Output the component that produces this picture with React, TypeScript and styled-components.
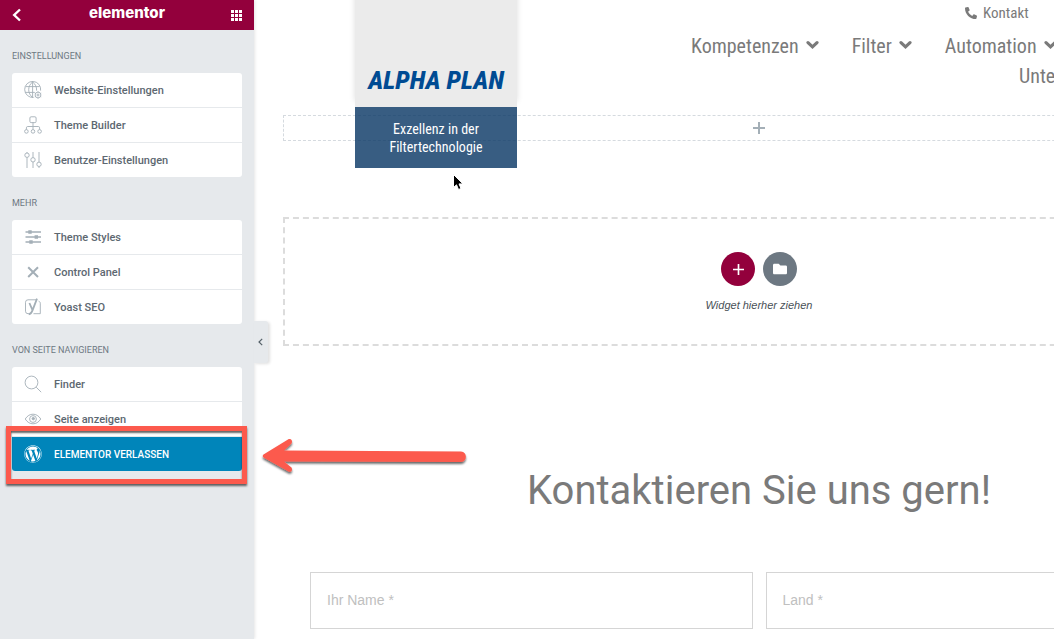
import React from "react";
import styled, { createGlobalStyle, css } from "styled-components";
import { FaPhoneAlt, FaWordpress, FaFolder } from "react-icons/fa";

const condensed = `"Liberation Sans Narrow", "Roboto Condensed", Roboto, sans-serif`;

const GlobalStyle = createGlobalStyle`
  *, *::before, *::after { box-sizing: border-box; }
  body {
    margin: 0;
    background: #fff;
    font-family: Roboto, "Liberation Sans", sans-serif;
    overflow: hidden;
  }
  button, input { font: inherit; color: inherit; }
  a { color: inherit; text-decoration: none; }
  svg { display: block; }
`;

const Editor = styled.div`
  position: relative;
  display: flex;
  min-height: 100vh;
  overflow: hidden;
`;

/* Sidebar */

const Panel = styled.aside`
  position: relative;
  z-index: 2;
  flex: 0 0 254px;
  background: #e6e9ec;
  box-shadow: 1px 0 3px rgba(0, 0, 0, 0.1);
`;

const PanelHeader = styled.header`
  display: flex;
  align-items: center;
  justify-content: space-between;
  height: 30px;
  padding: 0 10px;
  background: #93003c;
  color: #fff;
`;

const HeaderButton = styled.button`
  display: flex;
  align-items: center;
  justify-content: center;
  width: 14px;
  height: 24px;
  padding: 0;
  border: 0;
  background: none;
`;

const Wordmark = styled.span`
  padding-bottom: 4px;
  font: 800 15px/22px Inter, "Open Sans", sans-serif;
`;

const Menu = styled.nav`
  padding: 0 12px;
`;

const Group = styled.section`
  padding-top: 18px;
`;

const GroupTitle = styled.h2`
  margin: 0 0 9px;
  font-size: 9px;
  font-weight: 400;
  line-height: 16px;
  text-transform: uppercase;
  color: #6d7882;
`;

const List = styled.ul`
  margin: 0;
  padding: 0;
  list-style: none;
  border-radius: 3px;
  background: #fff;
`;

const Item = styled.li`
  position: relative;
  & + & {
    border-top: 1px solid #e6e9ec;
  }
`;

const ItemLink = styled.a<{ $primary?: boolean }>`
  display: flex;
  align-items: center;
  gap: 12px;
  height: 34px;
  padding: 0 12px;
  font-size: 11px;
  font-weight: 500;
  color: #5d6871;
  svg {
    flex: none;
    width: 18px;
    height: 18px;
    color: #a4afb7;
  }
  ${(p) =>
    p.$primary &&
    css`
      border-radius: 0 0 3px 3px;
      background: #0085ba;
      color: #fff;
      font-size: 10px;
      text-transform: uppercase;
      svg {
        color: #fff;
      }
    `}
`;

const Highlight = styled.span`
  position: absolute;
  inset: -11px -5px -13px -6px;
  border: 5px solid #fc5a4d;
  box-shadow: 0 2px 2px rgba(0, 0, 0, 0.6), inset 0 2px 2px rgba(0, 0, 0, 0.6);
  pointer-events: none;
`;

const Toggler = styled.button`
  position: absolute;
  left: 100%;
  top: 321px;
  display: flex;
  align-items: center;
  justify-content: center;
  width: 14px;
  height: 42px;
  padding: 0 2px 0 0;
  border: 0;
  border-radius: 0 3px 3px 0;
  background: #e6e9ec;
  color: #556068;
  box-shadow: 2px 1px 3px rgba(0, 0, 0, 0.12);
`;

/* Preview */

const Preview = styled.main`
  flex: 1;
  min-width: 0;
  overflow: hidden;
`;

const Canvas = styled.div`
  position: relative;
  width: calc(100% + 210px);
  padding: 0 29px;
  color: #7a7a7a;
`;

const SiteHeader = styled.header`
  height: 115px;
  padding-left: 408px;
  font-family: ${condensed};
`;

const ContactLink = styled.a`
  display: flex;
  align-items: center;
  gap: 6px;
  width: max-content;
  padding: 3px 0 0 274px;
  font-size: 15px;
  line-height: 20px;
`;

const NavRow = styled.div<{ $indent?: boolean }>`
  display: flex;
  gap: 33px;
  padding-left: ${(p) => (p.$indent ? "328px" : "0")};
  white-space: nowrap;
`;

const SiteNav = styled.nav`
  padding-top: 8px;
`;

const NavLink = styled.a`
  display: flex;
  align-items: center;
  gap: 7px;
  font-size: 20px;
  line-height: 30px;
  svg {
    margin-bottom: 2px;
  }
`;

const Brand = styled.div`
  position: absolute;
  z-index: 1;
  top: 0;
  left: 101px;
  width: 162px;
  text-align: center;
  font-family: ${condensed};
`;

const Logo = styled.a`
  display: flex;
  align-items: flex-end;
  justify-content: center;
  height: 107px;
  padding-bottom: 12px;
  background: #ebebeb;
  box-shadow: 0 -6px 6px rgba(0, 0, 0, 0.14);
  font-size: 26px;
  font-weight: 800;
  font-style: italic;
  line-height: 30px;
  white-space: nowrap;
  color: #004b93;
`;

const Claim = styled.p`
  margin: 0;
  padding: 13px 24px 12px;
  background: rgba(6, 52, 99, 0.8);
  color: #fff;
  font-size: 14px;
  line-height: 18px;
`;

const AddSection = styled.button`
  display: flex;
  align-items: center;
  justify-content: center;
  width: 100%;
  height: 26px;
  padding: 0;
  border: 1px dashed #d5dadf;
  background: none;
  color: #a4afb7;
`;

const DropArea = styled.section`
  display: flex;
  flex-direction: column;
  align-items: center;
  margin-top: 76px;
  padding: 33px 0 31px;
  border: 2px dashed #dcdcdc;
`;

const DropButtons = styled.div`
  display: flex;
  gap: 8px;
`;

const RoundButton = styled.button<{ $color: string }>`
  display: flex;
  align-items: center;
  justify-content: center;
  width: 34px;
  height: 34px;
  padding: 0;
  border: 0;
  border-radius: 50%;
  background: ${(p) => p.$color};
  color: #fff;
`;

const DropHint = styled.p`
  margin: 11px 0 0;
  font: italic 11px/16px "Liberation Sans", Arial, sans-serif;
  color: #495157;
`;

const Heading = styled.h1`
  margin: 120px 0 0;
  font: 400 40px/50px Roboto, sans-serif;
  text-align: center;
`;

const Form = styled.form`
  display: flex;
  gap: 13px;
  padding: 56px 27px 10px;
`;

const Field = styled.input`
  flex: 1;
  min-width: 0;
  height: 57px;
  padding: 0 16px 2px;
  border: 1px solid #d5d5d5;
  border-radius: 0;
  background: #fff;
  font: 14px/20px "Liberation Sans", Arial, sans-serif;
  &::placeholder {
    color: #c0c0c0;
    opacity: 1;
  }
`;

const Arrow = styled.svg`
  position: absolute;
  z-index: 3;
  left: 260px;
  top: 434px;
  pointer-events: none;
`;

const Cursor = styled.svg`
  position: absolute;
  z-index: 3;
  left: 452px;
  top: 173px;
  pointer-events: none;
`;

/* Line icons of the sidebar, drawn on an 18 unit grid */

const LineIcon = ({ children }: { children: React.ReactNode }) => (
  <svg viewBox="0 0 18 18" fill="none" stroke="currentColor" strokeWidth="0.9" aria-hidden="true">
    {children}
  </svg>
);

const GlobeIcon = () => (
  <LineIcon>
    <path d="M9.6 16.4A8 8 0 1 1 16.6 9.6M1.6 5.6h14M1.2 11.4h9.6M8.6.9v15.6M8.6.9C3.4 5 3.4 12.4 8.6 16.5M8.6.9c2.8 2.2 4.2 5.2 4 8.7" />
    <circle cx="14" cy="14" r="2.9" />
    <circle cx="14" cy="14" r="1" />
    <path d="M14 10.3v.8M14 16.9v.8M10.8 12.2l.7.4M16.5 15.4l.7.4M10.8 15.8l.7-.4M16.5 12.6l.7-.4" />
  </LineIcon>
);

const TreeIcon = () => (
  <LineIcon>
    <rect x="5.9" y=".8" width="6.2" height="5.8" rx="1.2" />
    <path d="M9 6.600v7M2.4 13.600v-1.800c0-.8.5-1.300 1.300-1.300h10.600c.8 0 1.300.5 1.300 1.300v1.800" />
    <circle cx="2.4" cy="15.4" r="1.8" />
    <circle cx="9" cy="15.4" r="1.8" />
    <circle cx="15.6" cy="15.4" r="1.8" />
  </LineIcon>
);

const FadersIcon = () => (
  <LineIcon>
    <path d="M3 1v1M3 6.400V17M9 1v5.600M9 11v6M15 1v10M15 15.600V17" />
    <circle cx="3" cy="4.2" r="2.2" />
    <circle cx="9" cy="8.8" r="2.2" />
    <circle cx="15" cy="13.3" r="2.2" />
  </LineIcon>
);

const SlidersIcon = () => (
  <LineIcon>
    <path strokeWidth="1.3" d="M1.500 4H17M1.500 9H17M1.500 14H17" />
    <path fill="currentColor" stroke="none" d="M4.300 2.200h3.400v3.600H4.300zM10.600 7.200H14v3.600h-3.400zM5.300 12.200h3.400v3.600H5.300z" />
  </LineIcon>
);

const CrossIcon = () => (
  <LineIcon>
    <path strokeWidth="2" d="M4.200 4.200l9.800 9.800M14 4.200l-9.800 9.800" />
  </LineIcon>
);

const YoastIcon = () => (
  <LineIcon>
    <path d="M12 1.800H4A2.500 2.500 0 0 0 1.500 4.300v8.900A2.500 2.500 0 0 0 4 15.700h2M14.600 3.200c1 .4 1.700.9 1.700 2v10.500H9.500" />
    <path strokeWidth="1.8" d="M5.400 5l3.100 7.200M13 .6L8.500 12.400c-.9 2.500-1.700 3.700-3.700 3.900" />
  </LineIcon>
);

const SearchIcon = () => (
  <LineIcon>
    <circle cx="7.5" cy="7.5" r="6.4" />
    <path d="M12.200 12.200l5 5" />
  </LineIcon>
);

const EyeIcon = () => (
  <LineIcon>
    <path d="M1.200 9C3.500 5.600 6 4.200 9 4.200S14.500 5.600 16.800 9C14.500 12.400 12 13.800 9 13.800S3.500 12.400 1.200 9z" />
    <circle cx="9" cy="9" r="3.4" />
    <circle cx="9.3" cy="8.6" r="1.2" fill="currentColor" />
  </LineIcon>
);

const PlusIcon = ({ size, weight }: { size: number; weight: number }) => (
  <svg width={size} height={size} viewBox="0 0 12 12" stroke="currentColor" strokeWidth={weight} aria-hidden="true">
    <path d="M6 0v12M0 6h12" />
  </svg>
);

const MenuChevron = () => (
  <svg width="13" height="10" viewBox="0 0 13 10" fill="none" stroke="currentColor" strokeWidth="3.2" strokeLinecap="round" aria-hidden="true">
    <path d="M2 2.600l4.500 4.200L11 2.600" />
  </svg>
);

type Entry = { label: string; icon: React.ReactNode; primary?: boolean };

const groups: { title: string; items: Entry[] }[] = [
  {
    title: "Einstellungen",
    items: [
      { label: "Website-Einstellungen", icon: <GlobeIcon /> },
      { label: "Theme Builder", icon: <TreeIcon /> },
      { label: "Benutzer-Einstellungen", icon: <FadersIcon /> },
    ],
  },
  {
    title: "Mehr",
    items: [
      { label: "Theme Styles", icon: <SlidersIcon /> },
      { label: "Control Panel", icon: <CrossIcon /> },
      { label: "Yoast SEO", icon: <YoastIcon /> },
    ],
  },
  {
    title: "Von Seite navigieren",
    items: [
      { label: "Finder", icon: <SearchIcon /> },
      { label: "Seite anzeigen", icon: <EyeIcon /> },
      { label: "Elementor verlassen", icon: <FaWordpress />, primary: true },
    ],
  },
];

export default function App() {
  return (
    <>
      <GlobalStyle />
      <Editor>
        <Panel>
          <PanelHeader>
            <HeaderButton aria-label="Zurück">
              <svg width="10" height="14" viewBox="0 0 10 14" fill="none" stroke="currentColor" strokeWidth="2.4">
                <path d="M8 1.500L2.200 7 8 12.500" />
              </svg>
            </HeaderButton>
            <Wordmark>elementor</Wordmark>
            <HeaderButton aria-label="Widgets">
              <svg width="11" height="11" viewBox="0 0 11 11" fill="currentColor">
                {[0, 4, 8].map((y) => [0, 4, 8].map((x) => <rect key={`${x}-${y}`} x={x} y={y} width="3" height="3" />))}
              </svg>
            </HeaderButton>
          </PanelHeader>
          <Menu>
            {groups.map((group) => (
              <Group key={group.title}>
                <GroupTitle>{group.title}</GroupTitle>
                <List>
                  {group.items.map((item) => (
                    <Item key={item.label}>
                      <ItemLink href="#" $primary={item.primary}>
                        {item.icon}
                        {item.label}
                      </ItemLink>
                      {item.primary && <Highlight />}
                    </Item>
                  ))}
                </List>
              </Group>
            ))}
          </Menu>
          <Toggler aria-label="Panel ausblenden">
            <svg width="5" height="8" viewBox="0 0 5 8" fill="none" stroke="currentColor" strokeWidth="1.2">
              <path d="M4.200.8L1 4l3.200 3.200" />
            </svg>
          </Toggler>
        </Panel>

        <Preview>
          <Canvas>
            <SiteHeader>
              <ContactLink href="#">
                <FaPhoneAlt size={12} />
                Kontakt
              </ContactLink>
              <SiteNav>
                <NavRow>
                  {["Kompetenzen", "Filter", "Automation"].map((label) => (
                    <NavLink key={label} href="#">
                      {label}
                      <MenuChevron />
                    </NavLink>
                  ))}
                </NavRow>
                <NavRow $indent>
                  <NavLink href="#">Unternehmen</NavLink>
                </NavRow>
              </SiteNav>
            </SiteHeader>
            <Brand>
              <Logo href="#">ALPHA PLAN</Logo>
              <Claim>Exzellenz in der Filtertechnologie</Claim>
            </Brand>
            <AddSection aria-label="Abschnitt hinzufügen">
              <PlusIcon size={12} weight={2} />
            </AddSection>
            <DropArea>
              <DropButtons>
                <RoundButton $color="#93003c" aria-label="Neuer Abschnitt">
                  <PlusIcon size={11} weight={1.8} />
                </RoundButton>
                <RoundButton $color="#6d7882" aria-label="Vorlage">
                  <FaFolder size={14} />
                </RoundButton>
              </DropButtons>
              <DropHint>Widget hierher ziehen</DropHint>
            </DropArea>
            <Heading>Kontaktieren Sie uns gern!</Heading>
            <Form>
              <Field type="text" placeholder="Ihr Name *" aria-label="Ihr Name" />
              <Field type="text" placeholder="Land *" aria-label="Land" />
            </Form>
          </Canvas>
        </Preview>

        <Cursor width="14" height="20" viewBox="0 0 14 20" aria-hidden="true">
          <path
            d="M1.500 1.500v13l3-2.700 2 4.700 2.500-1-2-4.600h4z"
            stroke="#fff"
            strokeWidth="1"
          />
        </Cursor>
        <Arrow width="212" height="46" viewBox="0 0 212 46" aria-hidden="true">
          <defs>
            <filter id="arrow-shadow" x="-5%" y="-20%" width="110%" height="150%">
              <feDropShadow dx="0" dy="2" stdDeviation="1" floodColor="#000" floodOpacity="0.6" />
            </filter>
          </defs>
          <path
            filter="url(#arrow-shadow)"
            fill="#fc5a4d"
            d="M3.500 20.500L28 5.500c3-1.500 5 1.500 3.500 4L24 16.500l177 1c6.500 0 6.500 10.500 0 10.500L24 27.500l7.500 6c1.500 3-.5 5-3 4L3.500 23.500c-1-.8-1-2.200 0-3z"
          />
        </Arrow>
      </Editor>
    </>
  );
}
